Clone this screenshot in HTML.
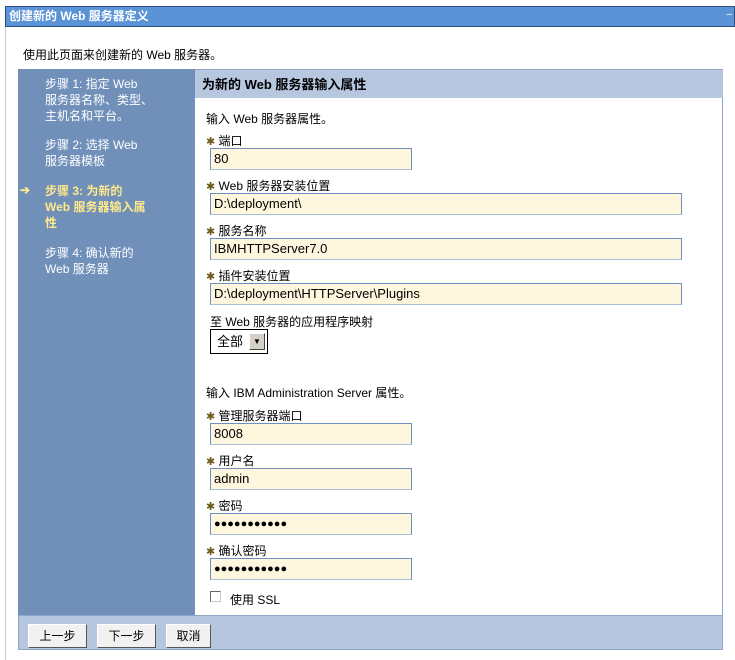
<!DOCTYPE html>
<html><head><meta charset="utf-8"><style>
*{margin:0;padding:0;box-sizing:border-box}
body{width:735px;height:660px;background:#fff;font-family:"Liberation Sans","Noto Sans CJK SC",sans-serif;font-size:12px;color:#000;position:relative;overflow:hidden}
.a{position:absolute;white-space:nowrap}
.title{left:5px;top:6px;width:730px;height:21px;background:#5a93d6;border:1px solid #2c4f7f;color:#fff;font-weight:bold;font-size:12px;line-height:19px;padding-left:3px}
.lb{left:5px;top:27px;width:1px;height:633px;background:#ccc}
.nav{left:18px;top:69px;width:177px;height:546px;background:#7090ba}
.rp{left:195px;top:69px;width:528px;height:546px;background:#fff;border-right:1px solid #8fa6c6;border-top:1px solid #8fa6c6}
.hdr{left:195px;top:69px;width:528px;height:29px;background:#b6c7df;font-weight:bold;font-size:13px;line-height:30px;padding-left:7px;border-top:1px solid #8fa6c6}
.foot{left:18px;top:615px;width:705px;height:35px;background:#b6c6de;border:1px solid #8fa6c6}
.nt{color:#fff;font-size:12px;line-height:16px}
.y{color:#ffe98a;font-weight:bold}
.st{color:#6b5a1a;font-size:11px}
.in{position:absolute;height:22px;background:#fff6de;border:1px solid #6f8fbf;border-bottom-color:#a9bfdc;font-size:13px;line-height:20px;padding-left:3px}
.btn{position:absolute;top:624px;height:24px;background:#f1f1f1;border:1px solid #fff;border-right:1px solid #555;border-bottom:1px solid #555;font-size:12px;line-height:22px;text-align:center}
.dots{font-size:11px;font-weight:bold}
</style></head><body>
<div class="a title">创建新的 Web 服务器定义</div>
<div class="a" style="right:3px;top:9px;color:#fff;font-size:10px">–</div>
<div class="a lb"></div>
<div class="a" style="left:23px;top:46px">使用此页面来创建新的 Web 服务器。</div>
<div class="a nav"></div>
<div class="a rp"></div>
<div class="a hdr">为新的 Web 服务器输入属性</div>
<div class="a nt" style="left:45px;top:76px">步骤 1: 指定 Web<br>服务器名称、类型、<br>主机名和平台。</div>
<div class="a nt" style="left:45px;top:137px">步骤 2: 选择 Web<br>服务器模板</div>
<div class="a nt y" style="left:20px;top:182px">➔</div>
<div class="a nt y" style="left:45px;top:183px">步骤 3: 为新的<br>Web 服务器输入属<br>性</div>
<div class="a nt" style="left:45px;top:245px">步骤 4: 确认新的<br>Web 服务器</div>

<div class="a" style="left:206px;top:110px">输入 Web 服务器属性。</div>
<div class="a" style="left:206px;top:132px"><span class="st">✱</span> 端口</div>
<div class="in" style="left:210px;top:148px;width:202px">80</div>
<div class="a" style="left:206px;top:177px"><span class="st">✱</span> Web 服务器安装位置</div>
<div class="in" style="left:210px;top:193px;width:472px">D:\deployment\</div>
<div class="a" style="left:206px;top:222px"><span class="st">✱</span> 服务名称</div>
<div class="in" style="left:210px;top:238px;width:472px">IBMHTTPServer7.0</div>
<div class="a" style="left:206px;top:267px"><span class="st">✱</span> 插件安装位置</div>
<div class="in" style="left:210px;top:283px;width:472px">D:\deployment\HTTPServer\Plugins</div>
<div class="a" style="left:210px;top:313px">至 Web 服务器的应用程序映射</div>
<div class="a" style="left:210px;top:329px;width:58px;height:25px;border:1px solid #000;background:#fff;font-size:13px;line-height:23px;padding-left:6px">全部
<div style="position:absolute;right:2px;top:3px;width:16px;height:17px;background:#d4d0c8;border:1px solid #fff;border-right-color:#444;border-bottom-color:#444;font-size:8px;line-height:15px;text-align:center">▼</div></div>
<div class="a" style="left:206px;top:384px">输入 IBM Administration Server 属性。</div>
<div class="a" style="left:206px;top:407px"><span class="st">✱</span> 管理服务器端口</div>
<div class="in" style="left:210px;top:423px;width:202px">8008</div>
<div class="a" style="left:206px;top:452px"><span class="st">✱</span> 用户名</div>
<div class="in" style="left:210px;top:468px;width:202px">admin</div>
<div class="a" style="left:206px;top:497px"><span class="st">✱</span> 密码</div>
<div class="in dots" style="left:210px;top:513px;width:202px">●●●●●●●●●●●</div>
<div class="a" style="left:206px;top:542px"><span class="st">✱</span> 确认密码</div>
<div class="in dots" style="left:210px;top:558px;width:202px">●●●●●●●●●●●</div>
<div class="a" style="left:210px;top:591px;width:11px;height:11px;border:1px solid #666;border-right-color:#ccc;border-bottom-color:#ccc;background:#fff"></div>
<div class="a" style="left:230px;top:591px">使用 SSL</div>

<div class="a foot"></div>
<div class="btn" style="left:28px;width:59px">上一步</div>
<div class="btn" style="left:97px;width:59px">下一步</div>
<div class="btn" style="left:166px;width:45px">取消</div>
</body></html>
